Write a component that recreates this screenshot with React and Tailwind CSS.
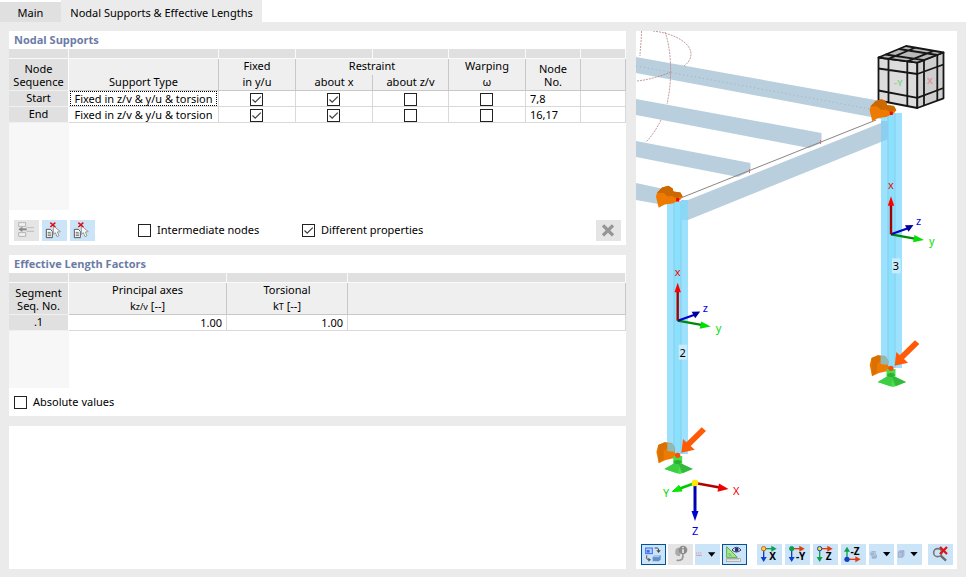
import React, { useState } from "react";
import clsx from "clsx";

/* ---------- Controls ---------- */

function CheckBox({ id, checked, onChange, label }) {
  return (
    <span className="inline-grid h-[13px] w-[13px] shrink-0 align-top">
      <input
        id={id}
        type="checkbox"
        aria-label={label}
        checked={checked}
        onChange={onChange}
        className="peer col-start-1 row-start-1 h-[13px] w-[13px] appearance-none border border-[#222] bg-white"
      />
      <svg
        viewBox="0 0 13 13"
        className="pointer-events-none col-start-1 row-start-1 hidden h-[13px] w-[13px] peer-checked:block"
      >
        <path d="M2.5 6.5 L5.2 9.2 L10.8 3.6" fill="none" stroke="#444" strokeWidth="1.3" />
      </svg>
    </span>
  );
}

function LabeledCheck({ id, text, initial = false, className }) {
  const [on, setOn] = useState(initial);
  return (
    <div className={clsx("flex items-center gap-1.5", className)}>
      <CheckBox id={id} checked={on} onChange={() => setOn(!on)} />
      <label htmlFor={id}>{text}</label>
    </div>
  );
}

function ToolButton({ label, tone = "blue", children }) {
  return (
    <button
      type="button"
      aria-label={label}
      className={clsx(
        "block h-[21px] w-[25px] shrink-0",
        tone === "blue" && "bg-[#cce4f7]",
        tone === "gray" && "bg-[#e5e5e5]",
        tone === "active" && "bg-[#cce4f7] outline outline-1 -outline-offset-1 outline-[#00539c]"
      )}
    >
      <svg viewBox="0 0 75 63" className="block h-[21px] w-[25px]">
        {children}
      </svg>
    </button>
  );
}

/* ---------- Icons ---------- */

function DeleteSelectIcon() {
  return (
    <>
      <path d="M13 28 h12 l6 6 v19 h-18 z" fill="#fff" stroke="#555" strokeWidth="3" />
      <path d="M17 37 h9 M17 42 h10 M17 47 h10" stroke="#555" strokeWidth="2.5" />
      <path d="M34 17 L34 43 L40 38 L45 50 L51 47 L46 36 L55 35 Z" fill="#f6f6f6" stroke="#999" strokeWidth="3" />
      <path d="M25 8 L40 21 M40 8 L25 21" stroke="#e01010" strokeWidth="4.5" />
    </>
  );
}

function AxisIcon({ dot, ring, right, down, text }) {
  return (
    <>
      <path d="M20 14 H46" stroke={right} strokeWidth="4" />
      <path d="M43 5 L59 14 L43 23 Z" fill={right} />
      <path d="M20 14 V42" stroke={down} strokeWidth="4" />
      <path d="M11 39 L20 54 L29 39 Z" fill={down} />
      <circle cx="20" cy="14" r="6.5" fill={dot} stroke={ring} strokeWidth="3" />
      <text x="47" y="48" textAnchor="middle" fontSize="30" fontWeight="700" fill="#000">{text}</text>
    </>
  );
}

/* ---------- 3D scene parts ---------- */

function Hinge({ x, y }) {
  return (
    <g transform={`translate(${x} ${y})`}>
      <path d="M-21.7 -2.7 L-20.7 -6.7 L-15.7 -12 L-9.3 -13.7 L-5 -11 L-4.3 -8 L2.7 -7 L5 -2.7 L3 0 L-5 4 L-13 5 L-19 8.3 Z" fill="#ee7b00" />
      <path d="M-20.7 -6.7 L-15.7 -12 L-9.3 -13.7 L-5 -11 L-4.3 -8 L2.7 -7 L5 -2.7 L-2 -1.5 L-6 -3.5 L-10 -3 L-14 -6.5 Z" fill="#cb6800" />
      <rect x="-1.5" y="-1.5" width="3" height="3.5" fill="#f00" />
    </g>
  );
}

function Column({ x, top, bottom, children }) {
  return (
    <g>
      <rect x={x} y={top} width="21" height={bottom - top} fill="#9ce2ff" />
      <rect x={x + 6.5} y={top} width="7.5" height={bottom - top} fill="#8ae1fd" />
      <path d={`M${x + 7} ${top} V${bottom} M${x + 14} ${top} V${bottom}`} stroke="#8cc8e6" strokeWidth="0.8" />
      {children}
    </g>
  );
}

function BaseSupport({ x, y }) {
  return (
    <g transform={`translate(${x} ${y})`}>
      <path d="M-21.3 -3 L-19.5 -10 L-13 -12.7 L-6 -12 L-2.5 -7 L-3 -2 L2 0 L-3 3 L-12 5 L-19 8.3 Z" fill="#ee7b00" />
      <path d="M-19.5 -10 L-13 -12.7 L-10 -12 L-11 -7 L-14 -4 L-14 4 L-19 8 Z" fill="#d97000" />
      <path d="M-10.3 -12 L-5 -11.5 L-2.5 -7 L-3.5 -3 L-10.3 -4 Z" fill="#92b9b6" />
      <path d="M-4.5 1 H4.5 V9 L15 14 L7 17.5 L2 19 L-13.3 14 L-4.5 9 Z" fill="#43e04a" />
      <path d="M-13.3 14 L-4 8.5 L2 9 L0 18.5 Z" fill="#3ccf43" />
      <path d="M4.5 9 L15 14 L4.5 18 L1 9 Z" fill="#35b83b" />
      <ellipse cx="0" cy="7" rx="3.8" ry="2" fill="#2fb035" />
      <circle cx="0" cy="0.3" r="2.6" fill="#ff4a10" />
      <path d="M24 -27.7 L28.3 -24 L13 -9 L17 -5.3 L3.7 -2.3 L5.3 -16 L8.7 -12.7 Z" fill="#ff5a05" />
    </g>
  );
}

function LocalAxes({ x, y, member }) {
  return (
    <g transform={`translate(${x} ${y})`} fontSize="11">
      <path d="M0 0 L25 4.5" stroke="#008a00" strokeWidth="2.2" />
      <path d="M23.5 0.8 L33 5.7 L22 8 Z" fill="#00e000" />
      <path d="M0 0 L17 -6" stroke="#0000c8" strokeWidth="2.2" />
      <path d="M14 -9 L22.5 -9.3 L17.5 -2.5 Z" fill="#00009c" />
      <path d="M0 0 V-30" stroke="#a80000" strokeWidth="2.4" />
      <path d="M-3.2 -28.5 L0 -38 L3.2 -28.5 Z" fill="#ff0000" />
      <text x="0" y="-45" textAnchor="middle" fill="#f00000">x</text>
      <text x="25" y="-9" fill="#0000e8">z</text>
      <text x="38" y="11" fill="#00e000">y</text>
      <rect x="1" y="24" width="8.5" height="15" fill="#c8ecfc" />
      <text x="5" y="36" textAnchor="middle" fill="#000">{member}</text>
    </g>
  );
}

function ViewCube() {
  return (
    <g stroke="#161616" strokeWidth="1.8" strokeLinejoin="round">
      <path d="M878.5 57.5 L917.3 62.7 V108 L878.5 100.5 Z" fill="#dcdcdc" />
      <path d="M917.3 62.7 L943.5 52.5 V98.3 L917.3 108 Z" fill="#cfcfcf" />
      <path d="M878.5 57.5 L906 46 L943.5 52.5 L917.3 62.7 Z" fill="#b9b9b9" />
      <path d="M888.5 58.8 V102.5 M907.3 61.3 V106 M878.5 68.5 L917.3 74 L943.5 64.5 M878.5 90.5 L917.3 97.8 L943.5 88" fill="none" />
      <path d="M924 60.2 V105.5 M937.3 55 V100.5" fill="none" />
      <path d="M888.5 58.8 L915.5 47.5 M907.3 61.3 L933.5 50.8 M924 60.2 L885.5 54.5 M937.3 55 L899 49" fill="none" />
      <g stroke="none" fontSize="9" fontWeight="700">
        <text x="894" y="86" fill="#8fd496">-Y</text>
        <text x="927" y="84" fill="#dd9a9a">X</text>
      </g>
    </g>
  );
}

function Scene() {
  return (
    <svg
      viewBox="636 31 321 508"
      role="img"
      aria-label="Structural model"
      className="block h-auto w-full"
      fontFamily="'Noto Sans', sans-serif"
    >
      {/* beams */}
      <g fill="#b9cfdd">
        <path d="M636 57 L881 101 V119 L871 117 L636 73 Z" />
        <path d="M636 99 L821.5 133 V143 L809 148 L636 115 Z" />
        <path d="M636 141 L750.5 163 V171 L738 177 L636 157 Z" />
        <path d="M636 183 L664 189 V205 L636 200 Z" />
        <path d="M688 200 L881 123 L888 120 V139 L881 142 L688 220 Z" />
      </g>
      <path d="M682 197.5 L876 120" stroke="#8a8682" strokeWidth="1" />
      <path d="M636 66 L870 109" stroke="#8fa3b0" strokeWidth="0.7" strokeDasharray="1 3" />
      <path d="M820.5 140 v4 M749.5 169 v4" stroke="#e07070" strokeWidth="1" />
      <g fill="none" stroke="#b58282" strokeWidth="0.8" strokeDasharray="2 1">
        <path d="M641.5 31 C641.5 42 640 50 640 56" />
        <path d="M653 31 C672 33 691 42 691 54 C691 59 688 63 684 66" />
        <path d="M665 32 C671 48 673 78 667 104" />
        <path d="M637 81 C648 80 661 76 671 72" />
        <path d="M661 120 C657 128 652 136 646 142" />
      </g>

      <Column x={881} top={113} bottom={368}>
        <path d="M881 121 h7 v18 l-7 3 z" fill="#8ccdf0" />
      </Column>
      <Column x={667} top={201} bottom={454}>
        <path d="M681 200 h7 v20 h-7 z" fill="#8cd6f6" />
      </Column>

      <ViewCube />
      <Hinge x={891.3} y={113} />
      <Hinge x={677.7} y={199.5} />
      <BaseSupport x={891} y={368} />
      <BaseSupport x={677.7} y={455} />
      <LocalAxes x={891} y={234.3} member="3" />
      <LocalAxes x={677.7} y={320.7} member="2" />

      {/* global axes */}
      <g fontSize="11">
        <path d="M695 483 L721 487.8" stroke="#b00000" strokeWidth="2.6" />
        <path d="M719 483.5 L728.5 489 L717.5 491.7 Z" fill="#f00000" />
        <path d="M695 483 L680 488.5" stroke="#00c800" strokeWidth="2.6" />
        <path d="M672.5 491.5 L679 485.5 L682 491 Z" fill="#00f000" stroke="#00e000" />
        <path d="M695 483 V512" stroke="#0000b0" strokeWidth="3" />
        <path d="M691.5 511 L695 521 L698.5 511 Z" fill="#0000d8" />
        <circle cx="695" cy="483" r="3.3" fill="#ffe800" />
        <text x="733" y="495" fill="#f00000">X</text>
        <text x="663" y="497" fill="#00e000">Y</text>
        <text x="692" y="535" fill="#0000e8">Z</text>
      </g>
    </svg>
  );
}

/* ---------- Tables ---------- */

const strip = "h-2.5 border-r border-b border-[#fafafa] bg-[#e0e0e0] p-0";
const head = "border-r border-[#c8c8c8] bg-[#efefef] p-0 font-normal";
const headEnd = "border-b border-[#c8c8c8]";
const headTop = "align-top leading-[14px]";
const headSub = "align-top leading-[13px]";
const headTall = "pb-0.5 align-bottom leading-[13px]";
const side = "border-r border-b border-r-white border-b-[#f0f0f0] bg-[#e0e0e0] p-0 font-normal";
const cell = "h-4 border-r border-b border-[#d9d9d9] bg-white p-0 leading-[15px]";

const SUPPORTS = [
  { id: "Start", type: "Fixed in z/v & y/u & torsion", flags: [true, true, false, false], nodes: "7,8" },
  { id: "End", type: "Fixed in z/v & y/u & torsion", flags: [true, true, false, false], nodes: "16,17" },
];
const FLAG_NAMES = ["Fixed in y/u", "Restraint about x", "Restraint about z/v", "Warping"];

function SupportsTable() {
  const [rows, setRows] = useState(SUPPORTS);

  const toggle = (r, c) =>
    setRows(rows.map((row, i) => (i === r ? { ...row, flags: row.flags.map((f, j) => (j === c ? !f : f)) } : row)));

  return (
    <table className="w-full table-fixed border-separate border-spacing-0 text-center">
      <colgroup>
        <col className="w-[60px]" />
        <col className="w-[150px]" />
        <col className="w-[77px]" />
        <col className="w-[77px]" />
        <col className="w-[76px]" />
        <col className="w-[77px]" />
        <col className="w-[55px]" />
        <col />
      </colgroup>
      <thead>
        <tr>
          {[0, 1, 2, 3, 4, 5, 6, 7].map((i) => (
            <td key={i} className={strip}></td>
          ))}
        </tr>
        <tr className="h-4">
          <th rowSpan={2} className={clsx(side, headTall)}>Node<br />Sequence</th>
          <th rowSpan={2} className={clsx(head, headEnd, headTall)}>Support Type</th>
          <th className={clsx(head, headTop)}>Fixed</th>
          <th colSpan={2} className={clsx(head, headTop)}>Restraint</th>
          <th className={clsx(head, headTop)}>Warping</th>
          <th rowSpan={2} className={clsx(head, headEnd, headTall)}>Node<br />No.</th>
          <th rowSpan={2} className={clsx(head, headEnd)}></th>
        </tr>
        <tr className="h-4">
          <th className={clsx(head, headEnd, headSub)}>in y/u</th>
          <th className={clsx(head, headEnd, headSub)}>about x</th>
          <th className={clsx(head, headEnd, headSub)}>about z/v</th>
          <th className={clsx(head, headEnd, headSub)}>ω</th>
        </tr>
      </thead>
      <tbody>
        {rows.map((row, r) => (
          <tr key={row.id} className="h-4">
            <th className={clsx(side, "align-top leading-[13px]")}>{row.id}</th>
            <td className={clsx(cell, "px-px")}>
              <div className={clsx("h-[15px] border border-dotted text-center leading-[13px] whitespace-nowrap", r === 0 ? "border-black" : "border-transparent")}>
                {row.type}
              </div>
            </td>
            {row.flags.map((f, c) => (
              <td key={c} className="h-4 border-r border-b border-[#d9d9d9] bg-white pt-px pr-px pb-0 pl-0 leading-[13px]">
                <CheckBox label={`${FLAG_NAMES[c]}, ${row.id}`} checked={f} onChange={() => toggle(r, c)} />
              </td>
            ))}
            <td className={clsx(cell, "pl-1 text-left")}>{row.nodes}</td>
            <td className={cell}></td>
          </tr>
        ))}
      </tbody>
    </table>
  );
}

function FactorsTable() {
  return (
    <table className="w-full table-fixed border-separate border-spacing-0 text-center">
      <colgroup>
        <col className="w-[60px]" />
        <col className="w-[158px]" />
        <col className="w-[121px]" />
        <col />
      </colgroup>
      <thead>
        <tr>
          {[0, 1, 2, 3].map((i) => (
            <td key={i} className={strip}></td>
          ))}
        </tr>
        <tr className="h-4">
          <th rowSpan={2} className={clsx(side, headTall)}>Segment<br />Seq. No.</th>
          <th className={clsx(head, headTop)}>Principal axes</th>
          <th className={clsx(head, headTop)}>Torsional</th>
          <th rowSpan={2} className={clsx(head, headEnd)}></th>
        </tr>
        <tr className="h-4">
          <th className={clsx(head, headEnd, headSub)}>k<span className="text-[9px]">z/v</span> [--]</th>
          <th className={clsx(head, headEnd, headSub)}>k<span className="text-[9px]">T</span> [--]</th>
        </tr>
      </thead>
      <tbody>
        <tr className="h-4">
          <th className={clsx(side, "align-top leading-[13px]")}>.1</th>
          <td className={clsx(cell, "pr-1 text-right")}>1.00</td>
          <td className={clsx(cell, "pr-1 text-right")}>1.00</td>
          <td className={cell}></td>
        </tr>
      </tbody>
    </table>
  );
}

function PanelTitle({ children }) {
  return (
    <h2 className="h-[18px] pl-[5px] font-['Open_Sans','Noto_Sans',sans-serif] font-bold leading-[18px] text-[#6b7ba6]">
      {children}
    </h2>
  );
}

/* ---------- View toolbar ---------- */

function ViewToolbar() {
  return (
    <div className="mt-[5px] flex pr-1 pb-1 pl-[5px]">
      <div className="flex gap-0.5">
        <ToolButton label="Switch view" tone="active">
          <rect x="14" y="12" width="20" height="17" fill="#b9d2ff" stroke="#3a6cf0" strokeWidth="3" />
          <rect x="17" y="18" width="9" height="8" fill="#3a6cf0" />
          <path d="M41 12 h8 q4 0 4 8" fill="none" stroke="#444" strokeWidth="3" />
          <path d="M46 19 h13 l-6 8 z" fill="#444" />
          <path d="M35 39 l7 -6 h17 v13 l-5 6 h-19 z" fill="#5f90cf" />
          <path d="M35 39 l7 -6 h17 l-6 7 z" fill="#a9c6ea" />
          <path d="M17 34 v8 q0 5 6 5" fill="none" stroke="#555" strokeWidth="3" />
          <path d="M22 41 l8 6 l-8 6 z" fill="#555" />
        </ToolButton>
        <ToolButton label="Result info" tone="gray">
          <path d="M24 14 q10 -6 14 2 q2 8 -2 20 q-10 2 -14 -6 q-2 -8 2 -16 z" fill="#aaa" />
          <path d="M26 48 q6 4 16 -2 q5 -8 2 -20" fill="none" stroke="#999" strokeWidth="5" />
          <circle cx="45" cy="18" r="13" fill="#8c8c8c" />
          <path d="M45 16 v11 M45 9 v4" stroke="#f2f2f2" strokeWidth="4.5" />
        </ToolButton>
        <ToolButton label="Line style">
          <path d="M3 27 h18" stroke="#d99aa8" strokeWidth="3" strokeDasharray="4 2" />
          <path d="M3 34 h18" stroke="#d99aa8" strokeWidth="3" />
          <path d="M39 25 h22 l-11 13 z" fill="#000" />
        </ToolButton>
        <ToolButton label="Show values" tone="active">
          <path d="M14 8 V40 H46 Z" fill="#a9e88f" stroke="#58b048" strokeWidth="3" />
          <path d="M21 27 V34 H28 Z" fill="#cce4f7" stroke="#58b048" strokeWidth="2" />
          <rect x="13" y="44" width="42" height="9" fill="#f0f0f0" stroke="#999" strokeWidth="2" />
          <path d="M18 44 v5 M24 44 v5 M30 44 v5 M36 44 v5 M42 44 v5 M48 44 v5" stroke="#888" strokeWidth="2" />
          <path d="M30 18 Q43 2 57 18 Q43 30 30 18 Z" fill="#fff" stroke="#26316e" strokeWidth="3" />
          <circle cx="44" cy="17" r="6" fill="#26316e" />
        </ToolButton>
      </div>

      <div className="ml-2.5 flex gap-[3px]">
        <ToolButton label="View in X">
          <AxisIcon dot="#ffe030" ring="#e0501c" right="#0ea04a" down="#1040c8" text="X" />
        </ToolButton>
        <ToolButton label="View in -Y">
          <AxisIcon dot="#0ea04a" ring="#0ea04a" right="#e03c10" down="#1040c8" text="-Y" />
        </ToolButton>
        <ToolButton label="View in Z">
          <AxisIcon dot="#ffe030" ring="#1040c8" right="#e03c10" down="#0ea04a" text="Z" />
        </ToolButton>
        <ToolButton label="View in -Z">
          <path d="M18 46 H46" stroke="#e03c10" strokeWidth="4" />
          <path d="M43 37 L59 46 L43 55 Z" fill="#e03c10" />
          <path d="M18 46 V20" stroke="#0ea04a" strokeWidth="4" />
          <path d="M9 23 L18 8 L27 23 Z" fill="#0ea04a" />
          <circle cx="18" cy="46" r="8" fill="#1040c8" />
          <text x="42" y="32" textAnchor="middle" fontSize="30" fontWeight="700">-Z</text>
        </ToolButton>
        <ToolButton label="Display mode">
          <path d="M4 24 l6 -3 h10 v10 l4 2 v7 l-4 4 h-12 v-8 l-4 -3 z" fill="#9db4d2" />
          <path d="M4 25 h13 v8 M9 34 h12" fill="none" stroke="#c3d2e6" strokeWidth="2" />
          <path d="M42 24 h22 l-11 13 z" fill="#000" />
        </ToolButton>
        <ToolButton label="View box">
          <path d="M4 24 l5 -4 h12 v15 l-5 5 h-12 z" fill="#b3bfdc" stroke="#94a5c8" strokeWidth="2" />
          <path d="M4 24 h12 v16 M16 24 l5 -4" fill="none" stroke="#94a5c8" strokeWidth="2" />
          <path d="M40 24 h22 l-11 13 z" fill="#000" />
        </ToolButton>
      </div>

      <div className="ml-auto">
        <ToolButton label="Reset zoom">
          <path d="M38 35 L54 50" stroke="#6b6b6b" strokeWidth="7" />
          <circle cx="29" cy="26" r="12" fill="none" stroke="#777" strokeWidth="5" />
          <path d="M36 9 L57 30 M57 9 L36 30" stroke="#e01414" strokeWidth="7" />
        </ToolButton>
      </div>
    </div>
  );
}

/* ---------- Page ---------- */

export default function App() {
  return (
    <div className="flex min-h-screen flex-col bg-[#ebebeb] font-['Noto_Sans',sans-serif] text-[11px] text-black">
      <div role="tablist" className="flex h-[22px] shrink-0 items-stretch bg-white">
        <button type="button" role="tab" aria-selected="false" className="mt-0.5 w-[61px] bg-[#e0e0e0] pt-0.5">Main</button>
        <button type="button" role="tab" aria-selected="true" className="w-[201px] bg-[#ebebeb] pt-1 whitespace-nowrap">
          Nodal Supports &amp; Effective Lengths
        </button>
      </div>

      <main className="grid flex-1 grid-cols-[minmax(0,617fr)_minmax(0,321fr)] gap-2.5 px-[9px] pt-[9px] pb-2">
        <div className="flex flex-col gap-2.5">
          <section className="bg-white">
            <PanelTitle>Nodal Supports</PanelTitle>
            <SupportsTable />
            <div className="h-[87px] w-[60px] bg-[#f7f7f7]"></div>
            <div className="flex items-center px-[5px] pt-2.5 pb-1">
              <div className="flex gap-[3px]">
                <ToolButton label="Insert row" tone="gray">
                  <path d="M14 8 h21 v11 h-21 z M14 38 h21 v11 h-21 z" fill="#f3f3f3" stroke="#aaa" strokeWidth="2.5" />
                  <path d="M24 28 H38" stroke="#888" strokeWidth="6" />
                  <path d="M25 20 L13 28 L25 36 Z" fill="#888" />
                  <path d="M38 23 h22 M38 34 h22" stroke="#b5b5b5" strokeWidth="2.5" />
                </ToolButton>
                <ToolButton label="Delete selected support"><DeleteSelectIcon /></ToolButton>
                <ToolButton label="Delete all supports"><DeleteSelectIcon /></ToolButton>
              </div>
              <LabeledCheck id="intermediate" text="Intermediate nodes" className="ml-[43px] w-[164px]" />
              <LabeledCheck id="different" text="Different properties" initial />
              <div className="ml-auto">
                <ToolButton label="Clear" tone="gray">
                  <path d="M21 16 L51 46 M51 16 L21 46" stroke="#959595" strokeWidth="10" />
                </ToolButton>
              </div>
            </div>
          </section>

          <section className="bg-white">
            <PanelTitle>Effective Length Factors</PanelTitle>
            <FactorsTable />
            <div className="h-[57px] w-[60px] bg-[#f7f7f7]"></div>
            <LabeledCheck id="absolute" text="Absolute values" className="h-7 pl-[5px]" />
          </section>

          <section className="min-h-12 flex-1 bg-white"></section>
        </div>

        <section className="self-start bg-white">
          <Scene />
          <ViewToolbar />
        </section>
      </main>
    </div>
  );
}
